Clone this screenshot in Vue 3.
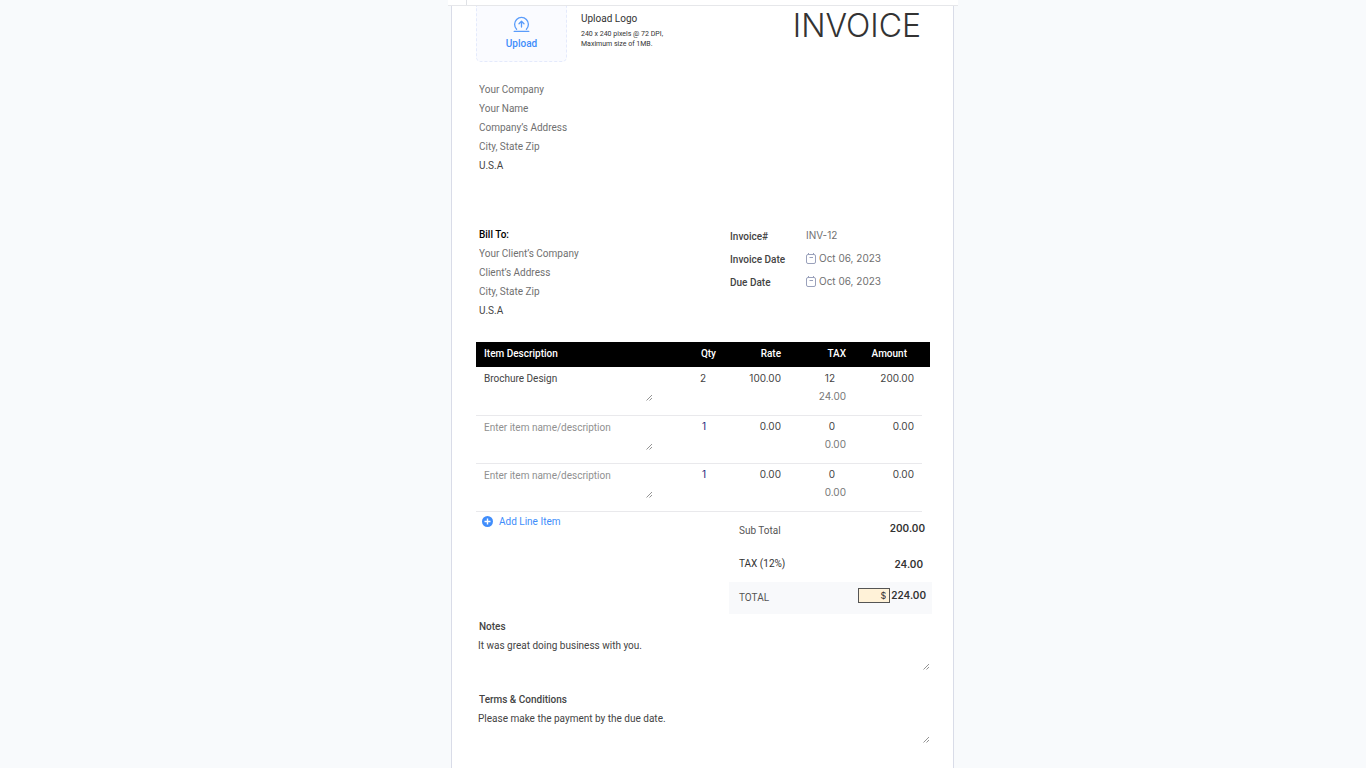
<script setup>
import { ref, computed } from 'vue'

const sender = ref([
  { label: 'Company', value: '', hint: 'Your Company' },
  { label: 'Name', value: '', hint: 'Your Name' },
  { label: 'Address', value: '', hint: 'Company’s Address' },
  { label: 'City', value: '', hint: 'City, State Zip' },
  { label: 'Country', value: 'U.S.A', hint: '' }
])
const client = ref([
  { label: 'Client company', value: '', hint: 'Your Client’s Company' },
  { label: 'Client address', value: '', hint: 'Client’s Address' },
  { label: 'Client city', value: '', hint: 'City, State Zip' },
  { label: 'Client country', value: 'U.S.A', hint: '' }
])
const meta = ref([
  { id: 'number', label: 'Invoice#', value: 'INV-12', date: false },
  { id: 'issued', label: 'Invoice Date', value: 'Oct 06, 2023', date: true },
  { id: 'due', label: 'Due Date', value: 'Oct 06, 2023', date: true }
])
const items = ref([
  { name: 'Brochure Design', qty: '2', rate: '100.00', tax: '12' },
  { name: '', qty: '1', rate: '0.00', tax: '0' },
  { name: '', qty: '1', rate: '0.00', tax: '0' }
])
const title = ref('INVOICE')
const currency = ref('$')
const remarks = ref([
  { id: 'notes', label: 'Notes', value: 'It was great doing business with you.' },
  { id: 'terms', label: 'Terms & Conditions', value: 'Please make the payment by the due date.' }
])

const amount = (i) => Number(i.qty) * Number(i.rate)
const taxOf = (i) => (amount(i) * Number(i.tax)) / 100
const subTotal = computed(() => items.value.reduce((s, i) => s + amount(i), 0))
const taxTotal = computed(() => items.value.reduce((s, i) => s + taxOf(i), 0))
const addItem = () => items.value.push({ name: '', qty: '1', rate: '0.00', tax: '0' })
</script>

<template>
  <div class="page">
    <main class="column">
      <div class="strip"></div>
      <form class="sheet" @submit.prevent>
        <header class="top">
          <button type="button" class="upload">
            <svg width="17" height="17" viewBox="0 0 17 17" fill="none" stroke="#5a9cfb" stroke-width="1.3" stroke-linecap="round" stroke-linejoin="round">
              <path d="M3.6 13.2A6.9 6.9 0 1 1 13.4 13.2M1.2 15.4H15.8M8.5 11V5.4M6 7.8L8.5 5.3L11 7.8" />
            </svg>
            <span>Upload</span>
          </button>
          <div class="hint">
            <h2>Upload Logo</h2>
            <p>240 x 240 pixels @ 72 DPI,<br />Maximum size of 1MB.</p>
          </div>
          <input v-model="title" class="title" aria-label="Document title" />
        </header>

        <section class="party sender">
          <input v-for="f in sender" :key="f.label" v-model="f.value" :placeholder="f.hint" :aria-label="f.label" />
        </section>

        <div class="details">
          <section class="party">
            <h3>Bill To:</h3>
            <input v-for="f in client" :key="f.label" v-model="f.value" :placeholder="f.hint" :aria-label="f.label" />
          </section>
          <section class="meta">
            <div v-for="m in meta" :key="m.id" class="meta-row">
              <label :for="m.id">{{ m.label }}</label>
              <svg v-if="m.date" width="11" height="11" viewBox="0 0 11 11" fill="none" stroke="#9aa1bb">
                <rect x="0.5" y="1.5" width="9" height="9" rx="1.5" />
                <path d="M2.5 0V2M7.5 0V2M3.5 4.5H7" />
              </svg>
              <input :id="m.id" v-model="m.value" />
            </div>
          </section>
        </div>

        <table class="items">
          <colgroup>
            <col /><col class="c-qty" /><col class="c-num" /><col class="c-num" /><col class="c-amount" />
          </colgroup>
          <thead>
            <tr>
              <th class="left">Item Description</th>
              <th>Qty</th>
              <th>Rate</th>
              <th>TAX</th>
              <th class="last">Amount</th>
            </tr>
          </thead>
          <tbody>
            <tr v-for="(item, n) in items" :key="n">
              <td class="left">
                <div class="area">
                  <textarea v-model="item.name" placeholder="Enter item name/description" :aria-label="`Item ${n + 1} description`"></textarea>
                  <svg class="grip" width="7" height="7" viewBox="0 0 7 7" stroke="#888" stroke-width="0.9"><path d="M0.5 6.5L6 1M3.5 6.5L6 4" /></svg>
                </div>
              </td>
              <td><input v-model="item.qty" class="qty" :class="{ navy: !item.name }" :aria-label="`Item ${n + 1} quantity`" /></td>
              <td><input v-model="item.rate" :aria-label="`Item ${n + 1} rate`" /></td>
              <td>
                <input v-model="item.tax" class="tax" :aria-label="`Item ${n + 1} tax`" />
                <div class="tax-value">{{ taxOf(item).toFixed(2) }}</div>
              </td>
              <td><div class="line-amount">{{ amount(item).toFixed(2) }}</div></td>
            </tr>
          </tbody>
        </table>

        <div class="summary">
          <button type="button" class="add" @click="addItem">
            <svg width="11" height="11" viewBox="0 0 11 11"><circle cx="5.5" cy="5.5" r="5.5" fill="#408dfb" /><path d="M5.5 2.5V8.5M2.5 5.5H8.5" stroke="#fff" stroke-width="1.4" /></svg>
            <span>Add Line Item</span>
          </button>
          <dl class="totals">
            <div class="sum"><dt>Sub Total</dt><dd>{{ subTotal.toFixed(2) }}</dd></div>
            <div class="sum tax-sum"><dt>TAX (12%)</dt><dd>{{ taxTotal.toFixed(2) }}</dd></div>
            <div class="sum grand">
              <dt>TOTAL</dt>
              <dd><input v-model="currency" aria-label="Currency" />{{ (subTotal + taxTotal).toFixed(2) }}</dd>
            </div>
          </dl>
        </div>

        <section v-for="r in remarks" :key="r.id" class="remark">
          <label :for="r.id">{{ r.label }}</label>
          <div class="area">
            <textarea :id="r.id" v-model="r.value"></textarea>
            <svg class="grip" width="7" height="7" viewBox="0 0 7 7" stroke="#888" stroke-width="0.9"><path d="M0.5 6.5L6 1M3.5 6.5L6 4" /></svg>
          </div>
        </section>
      </form>
    </main>
  </div>
</template>

<style>
body {
  background: #f8fafc;
}
</style>

<style scoped>
.page {
  display: grid;
  grid-template-columns: 448fr minmax(0, 510px) 408fr;
  min-height: 100vh;
  font: 10px/19px Roboto, "Liberation Sans", sans-serif;
  color: #444;
}
.page *,
.page {
  box-sizing: border-box;
}
.column {
  grid-column: 2;
  display: flex;
  flex-direction: column;
}
.strip {
  height: 6px;
  padding-left: 18px;
  background: #fff;
  border-bottom: 1px solid #e6e7ea;
}
.strip::before {
  content: "";
  display: block;
  width: 1px;
  height: 5px;
  background: #e0e2e6;
}
.sheet {
  flex: 1;
  margin: 0 4px 0 3px;
  padding: 0 21px 24px 24px;
  background: #fff;
  border: solid #d9dce8;
  border-width: 0 1px;
}
h2, h3, p, dl, dd {
  margin: 0;
  font-weight: 400;
}
input, textarea, button {
  font: inherit;
  color: inherit;
  margin: 0;
  padding: 0;
  border: 0;
  border-radius: 0;
  background: none;
  outline: none;
  min-width: 0;
}
input::placeholder {
  color: #707070;
  opacity: 1;
}
textarea::placeholder {
  color: #909090;
  opacity: 1;
}
.top {
  display: flex;
  align-items: flex-start;
  height: 74px;
}
.upload {
  display: flex;
  flex-direction: column;
  align-items: center;
  width: 91px;
  height: 56px;
  padding-top: 10px;
  background: #fafbff;
  border: 1px dashed #e4eafc;
  border-top: 0;
  border-radius: 0 0 5px 5px;
  color: #408dfb;
  font-weight: 500;
}
.upload span {
  line-height: 21px;
}
.hint {
  padding: 2px 0 0 14px;
  color: #333;
}
.hint h2 {
  font-size: 10px;
  line-height: 21px;
}
.hint p {
  font-size: 7px;
  line-height: 10px;
}
.title {
  flex: 1;
  height: 38px;
  padding-right: 11px;
  text-align: right;
  font-family: Inter, sans-serif;
  font-size: 32px;
  font-weight: 300;
  color: #333;
}
.party {
  display: flex;
  flex-direction: column;
  padding-left: 3px;
}
.party input {
  height: 19px;
}
.party h3 {
  font-size: 10px;
  font-weight: 500;
  color: #000;
}
.details {
  display: grid;
  grid-template-columns: 1fr 202px;
  margin: 50px 0 22px;
}
.meta {
  margin-top: -1px;
}
.meta-row {
  display: flex;
  align-items: center;
  height: 23px;
}
.meta-row label {
  width: 76px;
  padding-top: 2px;
  font-weight: 500;
}
.meta-row svg {
  margin-right: 2px;
}
.meta-row input {
  flex: 1;
  color: #707070;
  font-family: Inter, sans-serif;
}
.items {
  width: calc(100% - 10px);
  border-collapse: separate;
  border-spacing: 0;
  table-layout: fixed;
}
.c-qty {
  width: 64px;
}
.c-num {
  width: 65px;
}
.c-amount {
  width: 68px;
}
.items th {
  height: 25px;
  padding: 0 8px 2px;
  background: #000;
  color: #fff;
  font-weight: 500;
  text-align: right;
}
.items th.left {
  text-align: left;
}
.items th.last {
  padding-right: 15px;
  box-shadow: 8px 0 0 #000;
}
.items td {
  height: 48px;
  padding: 2px 8px 0;
  text-align: right;
  vertical-align: top;
}
.items tbody tr + tr td {
  border-top: 1px solid #e9e9ec;
  padding-top: 1px;
}
.items tbody tr + tr td.left {
  padding-top: 2px;
}
.items td input {
  display: block;
  width: 100%;
  height: 18px;
  text-align: right;
  font-family: Inter, sans-serif;
}
.items td input.qty {
  padding-right: 10px;
}
.items td input.navy {
  color: #1f2a7a;
}
.items td input.tax {
  padding-right: 11px;
}
.line-amount, .tax-value {
  line-height: 18px;
  font-family: Inter, sans-serif;
}
.tax-value {
  color: #777;
}
.area {
  position: relative;
}
.area textarea {
  display: block;
  width: 100%;
  height: 35px;
  resize: none;
  overflow: hidden;
}
.items .area textarea {
  height: 32px;
}
.grip {
  position: absolute;
  right: -1px;
  bottom: 0;
}
.summary {
  display: grid;
  grid-template-columns: 1fr 203px;
  align-items: start;
  background: linear-gradient(#e9e9ec, #e9e9ec) 0 0 / calc(100% - 10px) 1px no-repeat;
  padding-top: 1px;
}
.add {
  display: flex;
  align-items: center;
  justify-self: start;
  gap: 6px;
  padding-left: 6px;
  color: #408dfb;
}
.sum {
  display: flex;
  align-items: center;
  justify-content: space-between;
  height: 35px;
  padding: 0 7px 0 10px;
}
.sum dt {
  padding-top: 2px;
  color: #555;
}
.sum dd {
  display: flex;
  align-items: center;
  gap: 1px;
  padding-bottom: 3px;
  font-family: Inter, sans-serif;
  font-weight: 600;
  color: #333;
}
.tax-sum {
  padding-right: 9px;
}
.tax-sum dt {
  padding: 0 0 3px;
  color: #333;
}
.tax-sum dd {
  padding-bottom: 0;
}
.grand {
  height: 32px;
  padding-right: 6px;
  background: #f8f9fb;
}
.grand dt {
  padding: 0 0 2px;
}
.grand dd {
  padding-bottom: 5px;
}
.grand input {
  width: 32px;
  height: 15px;
  padding-right: 3px;
  text-align: right;
  background: #fff2d8;
  border: 1px solid #555;
  font-size: 9px;
  font-weight: 400;
}
.remark {
  margin-top: 3px;
}
.remark + .remark {
  margin-top: 19px;
}
.remark label {
  display: block;
  padding-left: 3px;
  font-weight: 500;
}
.remark textarea {
  padding-left: 2px;
}
.remark .grip {
  right: 2px;
  bottom: 1px;
}
</style>
